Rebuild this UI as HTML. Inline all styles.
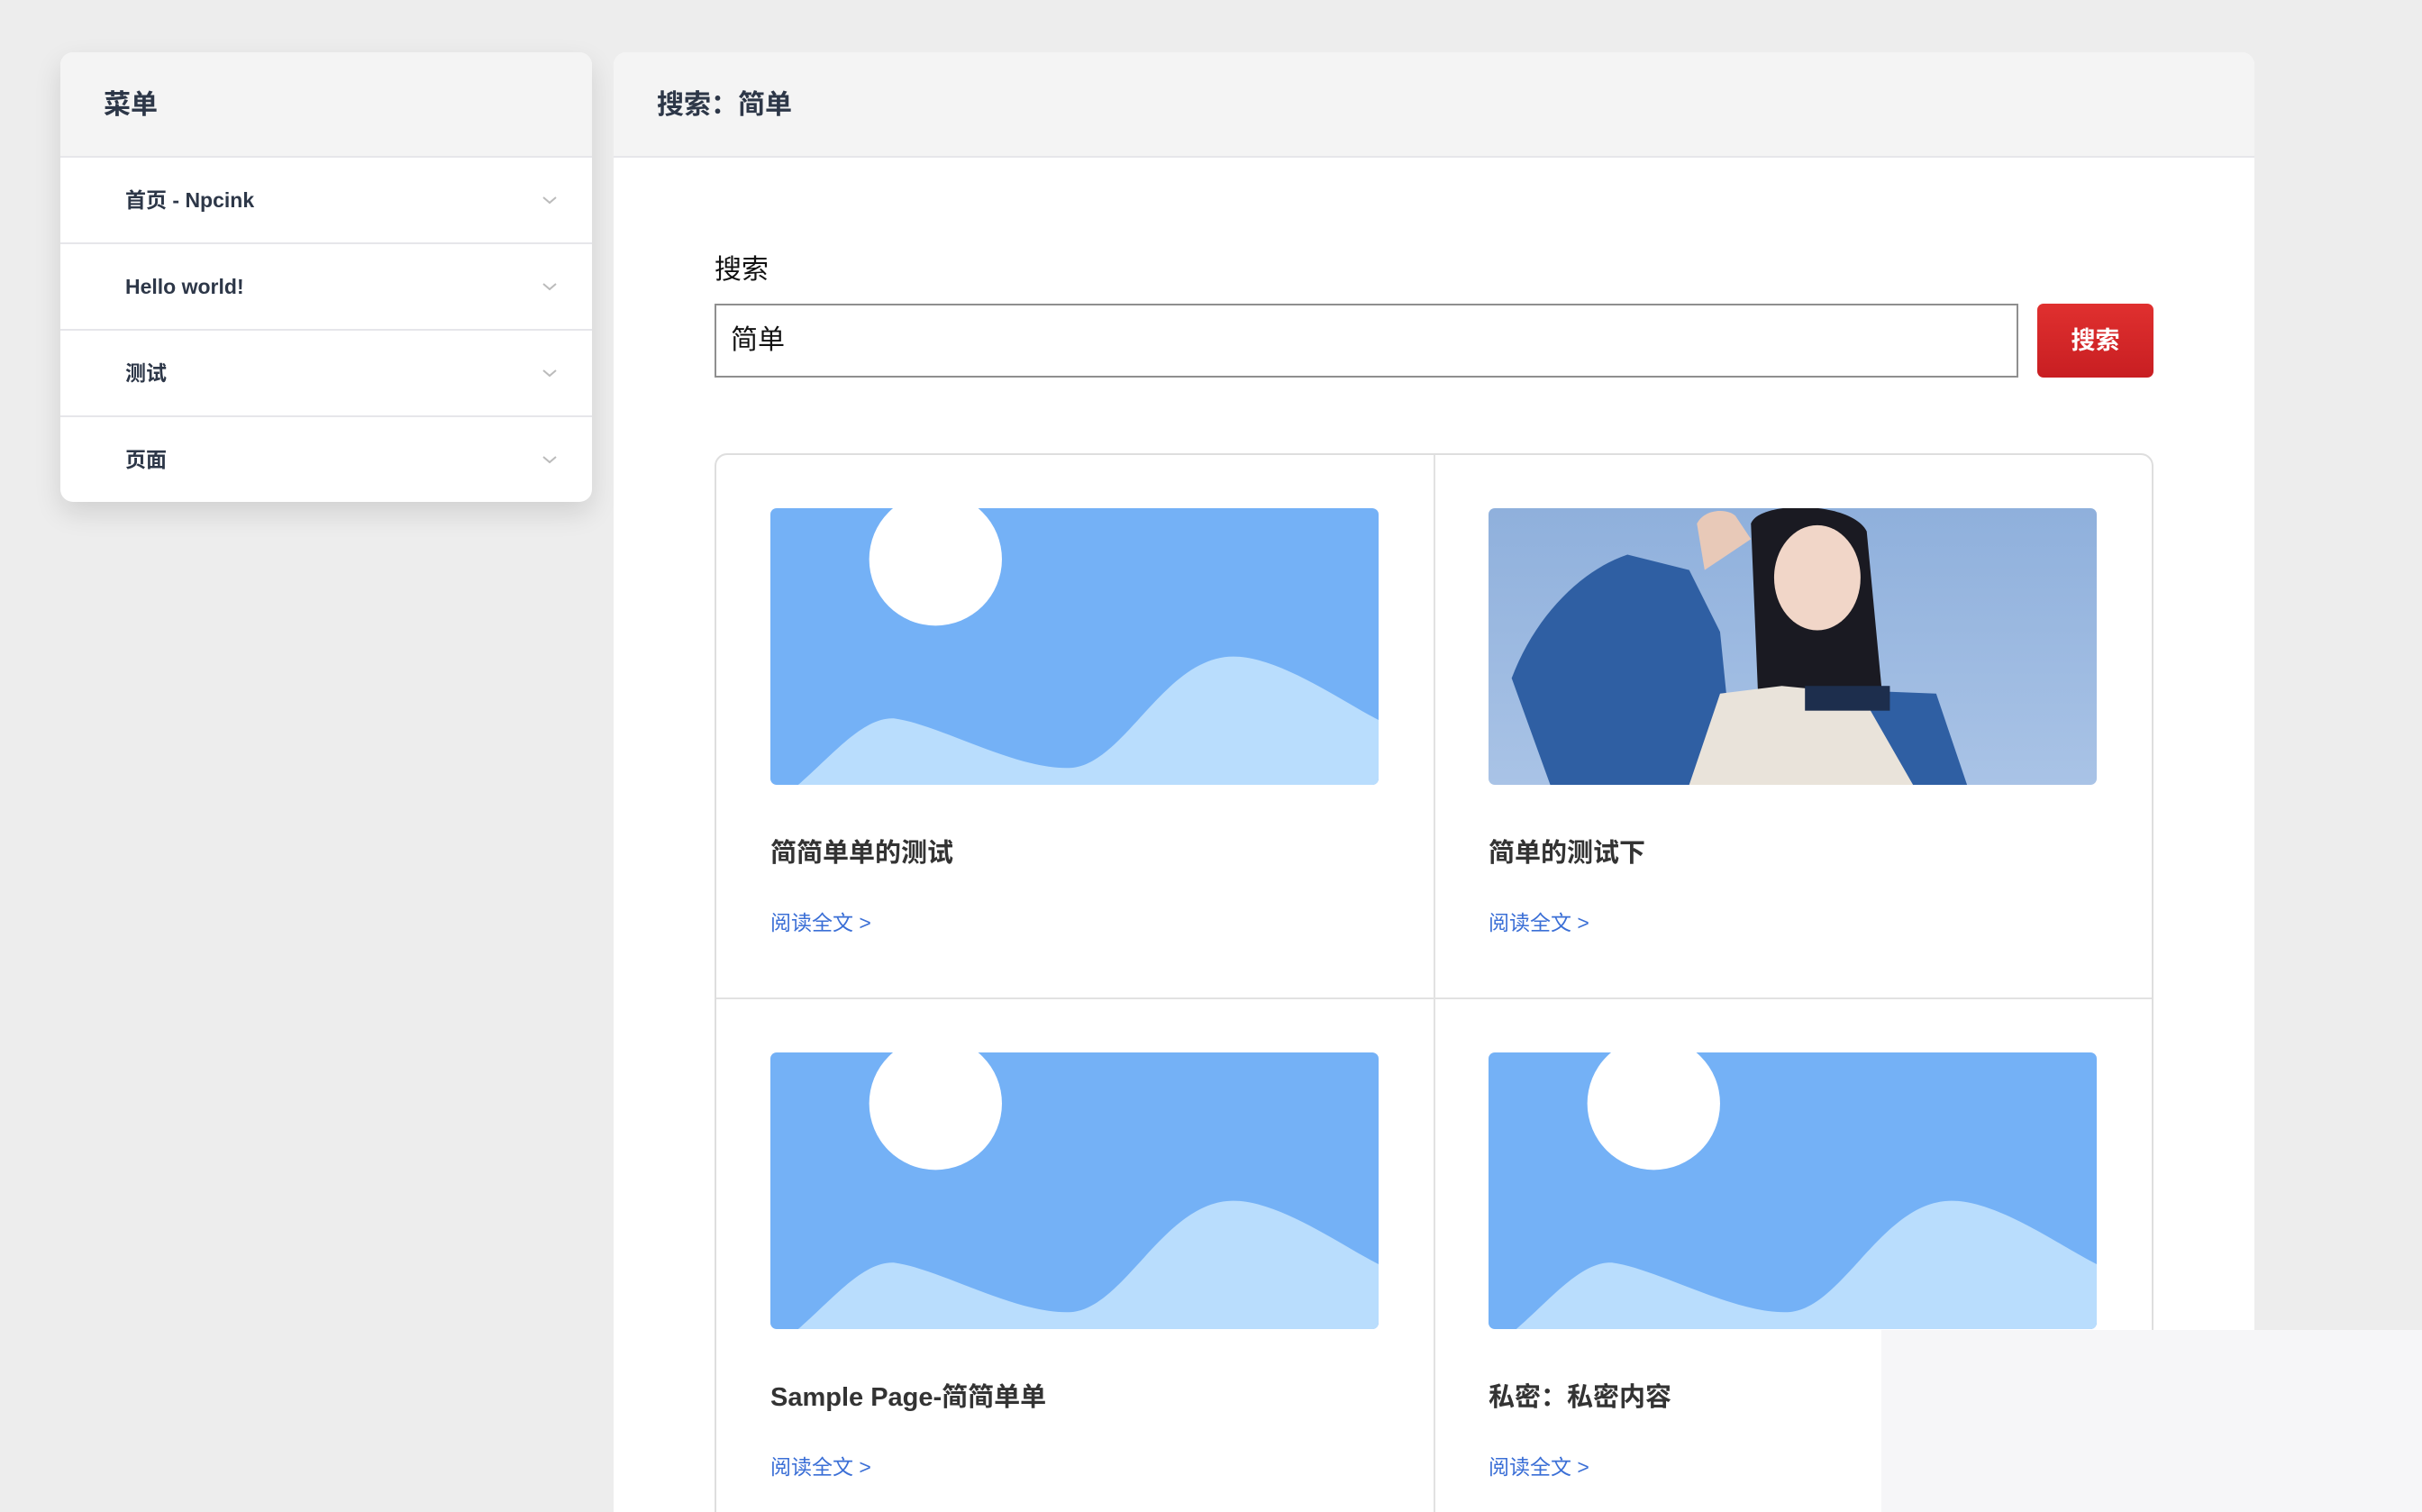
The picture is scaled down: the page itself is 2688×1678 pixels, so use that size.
<!DOCTYPE html>
<html style="width:2688px;height:1678px;overflow:hidden"><head><meta charset="utf-8"><style>
*{box-sizing:border-box;margin:0;padding:0}
body{width:2688px;height:1678px;overflow:hidden;background:#ededed;font-family:"Liberation Sans","Noto Sans CJK SC",sans-serif;position:relative}
.side{position:absolute;left:67px;top:58px;width:590px;height:499px;background:#fff;border-radius:14px;box-shadow:0 12px 30px rgba(0,0,0,.12);overflow:hidden}
.side .hd{height:117px;background:#f4f4f4;border-bottom:2px solid #e6e6ea;padding-left:48px;line-height:117px;font-size:30px;font-weight:bold;color:#2d3748}
.row{height:96px;border-bottom:2px solid #e6e6ea;padding-left:72px;line-height:94px;font-size:23px;font-weight:bold;color:#2d3748;position:relative}
.row:last-child{border-bottom:none}
.row svg{position:absolute;right:38px;top:42px}
.main{position:absolute;left:681px;top:58px;width:1821px;height:1620px;background:#fff;border-radius:14px 14px 0 0;overflow:hidden}
.main .hd{height:117px;background:#f4f4f4;border-bottom:2px solid #e6e6ea;padding-left:48px;line-height:117px;font-size:30px;font-weight:bold;color:#2d3748}
.lbl{position:absolute;left:112px;top:216px;font-size:30px;color:#111}
.inp{position:absolute;left:112px;top:279px;width:1447px;height:82px;border:2px solid #8f8f8f;font-size:30px;line-height:78px;padding-left:16px;color:#111}
.btn{position:absolute;left:1580px;top:279px;width:129px;height:82px;background:linear-gradient(#e0302f,#c81e22);border-radius:7px;color:#fff;font-size:27px;font-weight:bold;text-align:center;line-height:82px}
.grid{position:absolute;left:112px;top:445px;width:1597px;height:1300px;border:2px solid #dedede;border-radius:14px}
.vl{position:absolute;left:796px;top:0;width:2px;height:100%;background:#e2e2e2}
.hl{position:absolute;left:0;top:602px;width:100%;height:2px;background:#e2e2e2}
.cell{position:absolute}
.cell .im{width:675px;height:307px;border-radius:7px;overflow:hidden;display:block}
.cell .t{font-size:29px;font-weight:bold;color:#333;margin-top:52px}
.cell .a{font-size:23px;color:#3b6fd6;margin-top:40px}
.ov{position:absolute;left:2088px;top:1476px;width:600px;height:202px;background:#f6f6f8}
</style></head><body>
<div class="side">
<div class="hd">菜单</div>
<div class="row">首页 - Npcink<svg width="18" height="10" viewBox="0 0 18 10"><path d="M2 2l7 6 7-6" fill="none" stroke="#bbb" stroke-width="2"/></svg></div>
<div class="row">Hello world!<svg width="18" height="10" viewBox="0 0 18 10"><path d="M2 2l7 6 7-6" fill="none" stroke="#bbb" stroke-width="2"/></svg></div>
<div class="row">测试<svg width="18" height="10" viewBox="0 0 18 10"><path d="M2 2l7 6 7-6" fill="none" stroke="#bbb" stroke-width="2"/></svg></div>
<div class="row">页面<svg width="18" height="10" viewBox="0 0 18 10"><path d="M2 2l7 6 7-6" fill="none" stroke="#bbb" stroke-width="2"/></svg></div>
</div>
<div class="main">
<div class="hd">搜索：简单</div>
<div class="lbl">搜索</div>
<div class="inp">简单</div>
<div class="btn">搜索</div>
<div class="grid">
<div class="vl"></div><div class="hl"></div>
<div class="cell" style="left:60px;top:59px">
<svg class="im" viewBox="0 0 394 179" preserveAspectRatio="none"><rect width="394" height="179" fill="#74b1f6"/><circle cx="107" cy="33" r="43" fill="#fff"/><path d="M18 179C40 160 60 135 80 136C110 140 160 170 195 168C230 165 255 96 300 96C330 96 370 125 394 137L394 179Z" fill="#b9ddfd"/></svg>
<div class="t">简简单单的测试</div><div class="a">阅读全文 &gt;</div></div>
<div class="cell" style="left:857px;top:59px">
<svg class="im" viewBox="0 0 394 179" preserveAspectRatio="none"><defs><linearGradient id="s" x1="0" y1="0" x2="0" y2="1"><stop offset="0" stop-color="#8fb0dc"/><stop offset="1" stop-color="#a9c3e6"/></linearGradient></defs><rect width="394" height="179" fill="url(#s)"/><path d="M15 110C30 70 60 40 90 30L130 40 150 80 160 179H40Z" fill="#2f5fa3"/><path d="M135 10C140 0 155 0 160 5L170 20 140 40Z" fill="#e8c9b8"/><path d="M170 10C175 -5 235 -5 245 15L255 120 240 130 175 130Z" fill="#1a1a22"/><ellipse cx="213" cy="45" rx="28" ry="34" fill="#f1d6c8"/><path d="M150 120L190 115 240 120 275 130 300 179H130Z" fill="#e9e3da"/><path d="M240 118L290 120 310 179 275 179Z" fill="#2f5fa3"/><rect x="205" y="115" width="55" height="16" fill="#1d2e4d"/></svg>
<div class="t">简单的测试下</div><div class="a">阅读全文 &gt;</div></div>
<div class="cell" style="left:60px;top:663px">
<svg class="im" viewBox="0 0 394 179" preserveAspectRatio="none"><rect width="394" height="179" fill="#74b1f6"/><circle cx="107" cy="33" r="43" fill="#fff"/><path d="M18 179C40 160 60 135 80 136C110 140 160 170 195 168C230 165 255 96 300 96C330 96 370 125 394 137L394 179Z" fill="#b9ddfd"/></svg>
<div class="t">Sample Page-简简单单</div><div class="a">阅读全文 &gt;</div></div>
<div class="cell" style="left:857px;top:663px">
<svg class="im" viewBox="0 0 394 179" preserveAspectRatio="none"><rect width="394" height="179" fill="#74b1f6"/><circle cx="107" cy="33" r="43" fill="#fff"/><path d="M18 179C40 160 60 135 80 136C110 140 160 170 195 168C230 165 255 96 300 96C330 96 370 125 394 137L394 179Z" fill="#b9ddfd"/></svg>
<div class="t">私密：私密内容</div><div class="a">阅读全文 &gt;</div></div>
</div>
</div>
<div class="ov"></div>
</body></html>
